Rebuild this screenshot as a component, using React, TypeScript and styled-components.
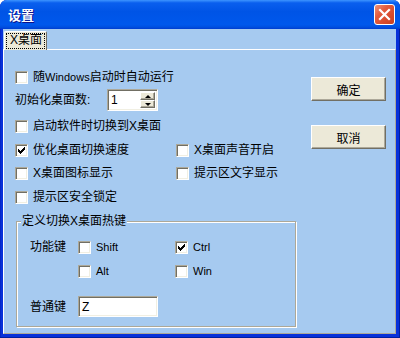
import React from "react";
import styled, { createGlobalStyle } from "styled-components";

const FONT = `"Liberation Sans", "Noto Sans CJK SC", sans-serif`;

const Global = createGlobalStyle`
  html, body { margin: 0; padding: 0; background: #ffffff; }
  body { width: 400px; height: 338px; overflow: hidden; }
`;

const Window = styled.div`
  width: 400px;
  height: 338px;
  box-sizing: border-box;
  display: flex;
  flex-direction: column;
  background: #0831d9;
  border-radius: 7px 7px 0 0;
  overflow: hidden;
  font-family: ${FONT};
  font-size: 12px;
  color: #000;
  box-shadow: inset -1px -1px #001ea0, inset 1px 0 #0427c8;
`;

const TitleBar = styled.div`
  height: 29px;
  flex: none;
  display: flex;
  align-items: center;
  justify-content: space-between;
  padding: 0 5px 0 8px;
  background: linear-gradient(
    180deg,
    #3d95ff 0%,
    #0a5fee 10%,
    #0054e6 40%,
    #0058ec 85%,
    #0050e0 93%,
    #003dd0 100%
  );
`;

const Title = styled.span`
  font-family: "Noto Sans CJK SC", sans-serif;
  font-weight: bold;
  font-size: 13px;
  color: #fff;
  text-shadow: 1px 1px #0f1089;
  line-height: 16px;
`;

const CloseButton = styled.div`
  width: 21px;
  height: 21px;
  box-sizing: border-box;
  border: 1px solid #fff;
  border-radius: 3px;
  background: linear-gradient(135deg, #f0947a 0%, #e35d3f 35%, #d74a2c 70%, #c8401f 100%);
  display: flex;
  align-items: center;
  justify-content: center;
`;

const Client = styled.div`
  flex: 1;
  display: flex;
  flex-direction: column;
  margin: 0 4px 4px 3px;
  background: #a6caf0;
`;

const TabStrip = styled.div`
  height: 20px;
  flex: none;
  display: flex;
  align-items: flex-end;
  padding-left: 1px;
`;

const Tab = styled.div`
  height: 19px;
  margin-bottom: -1px;
  position: relative;
  z-index: 1;
  box-sizing: border-box;
  padding: 1px 1px 0 1px;
  background: #ece9d8;
  border-top: 1px solid #fff;
  border-left: 1px solid #fff;
  border-right: 1px solid #716f64;
  border-radius: 2px 2px 0 0;
  display: flex;
  align-items: flex-start;
`;

const TabLabel = styled.span`
  border: 1px dotted #000;
  padding: 0 2px 0 3px;
  line-height: 13px;
  height: 14px;
`;

const Latin = styled.span`
  font-size: 11px;
`;

const Panel = styled.div`
  flex: 1;
  box-sizing: border-box;
  border-top: 1px solid #fff;
  border-left: 1px solid #fff;
  border-right: 1px solid #aca899;
  border-bottom: 1px solid #aca899;
  display: grid;
  grid-template-columns: 1fr 75px;
  padding: 0 9px 0 11px;
`;

const LeftCol = styled.div`
  display: flex;
  flex-direction: column;
  padding-top: 18px;
`;

const Line = styled.div<{ $mt: number; $h?: number }>`
  display: flex;
  align-items: center;
  height: ${(p) => p.$h ?? 18}px;
  margin-top: ${(p) => p.$mt}px;
  line-height: 14px;
  white-space: nowrap;
`;

const PairLine = styled.div<{ $mt: number }>`
  display: grid;
  grid-template-columns: 161px auto;
  align-items: center;
  height: 18px;
  margin-top: ${(p) => p.$mt}px;
  line-height: 14px;
  white-space: nowrap;
`;

const CheckItem = styled.label`
  display: flex;
  align-items: center;
  gap: 5px;
`;

const Box = styled.span`
  width: 13px;
  height: 13px;
  box-sizing: border-box;
  flex: none;
  background: #fff;
  border: 1px solid;
  border-color: #aca899 #fff #fff #aca899;
  box-shadow: inset 1px 1px #716f64, inset -1px -1px #f1efe2;
  display: flex;
  align-items: center;
  justify-content: center;
`;

const FieldLabel = styled.span<{ $w: number }>`
  width: ${(p) => p.$w}px;
  flex: none;
`;

const Sunken = styled.div<{ $w: number; $h: number }>`
  width: ${(p) => p.$w}px;
  height: ${(p) => p.$h}px;
  box-sizing: border-box;
  border: 1px solid;
  border-color: #aca899 #fff #fff #aca899;
  box-shadow: inset 1px 1px #716f64, inset -1px -1px #f1efe2;
  background: #fff;
  display: flex;
  align-items: center;
  padding: 2px 2px 2px 3px;
  line-height: 14px;
`;

const SpinText = styled.span`
  flex: 1;
`;

const SpinButtons = styled.div`
  width: 15px;
  align-self: stretch;
  display: flex;
  flex-direction: column;
`;

const SpinButton = styled.div`
  flex: 1;
  box-sizing: border-box;
  background: #ece9d8;
  border: 1px solid;
  border-color: #fff #716f64 #716f64 #fff;
  box-shadow: inset -1px -1px #aca899;
  display: flex;
  align-items: center;
  justify-content: center;
`;

const Arrow = styled.span<{ $up?: boolean }>`
  width: 0;
  height: 0;
  border-left: 3px solid transparent;
  border-right: 3px solid transparent;
  ${(p) =>
    p.$up ? "border-bottom: 3px solid #000;" : "border-top: 3px solid #000;"}
`;

const Group = styled.div`
  position: relative;
  margin: 15px 0 0 1px;
  width: 280px;
  height: 106px;
  box-sizing: border-box;
  border: 1px solid #aca899;
  box-shadow: inset 1px 1px #fff, 1px 1px #fff;
  padding: 16px 0 0 13px;
`;

const GroupLegend = styled.span`
  position: absolute;
  top: -8px;
  left: 4px;
  padding: 0 1px;
  background: #a6caf0;
  line-height: 14px;
  white-space: nowrap;
`;

const GroupRow = styled.div<{ $mt: number; $h?: number }>`
  display: grid;
  grid-template-columns: 48px 97px auto;
  align-items: center;
  height: ${(p) => p.$h ?? 18}px;
  margin-top: ${(p) => p.$mt}px;
  line-height: 14px;
  white-space: nowrap;
`;

const RightCol = styled.div`
  display: flex;
  flex-direction: column;
  gap: 24px;
  padding-top: 27px;
`;

const Button = styled.button`
  width: 75px;
  height: 24px;
  box-sizing: border-box;
  padding: 0;
  background: #ece9d8;
  font: 12px ${FONT};
  color: #000;
  border: 1px solid;
  border-color: #fff #716f64 #716f64 #fff;
  box-shadow: inset -1px -1px #aca899;
`;

function Check({ checked, children }: { checked?: boolean; children: React.ReactNode }) {
  return (
    <CheckItem>
      <Box>
        {checked && (
          <svg width="7" height="7" viewBox="0 0 7 7" shapeRendering="crispEdges">
            <path d="M6 0h1v3h-1v1h-1v1h-1v1h-1v1h-1v-1h-1v-1h-1v-3h1v1h1v1h1v-1h1v-1h1z" fill="#000" />
          </svg>
        )}
      </Box>
      <span>{children}</span>
    </CheckItem>
  );
}

export default function App() {
  return (
    <>
      <Global />
      <Window>
        <TitleBar>
          <Title>设置</Title>
          <CloseButton>
            <svg width="19" height="19" viewBox="0 0 19 19">
              <path d="M5 5L14 14M14 5L5 14" stroke="#fff" strokeWidth="2.2" strokeLinecap="square" />
            </svg>
          </CloseButton>
        </TitleBar>
        <Client>
          <TabStrip>
            <Tab>
              <TabLabel>X桌面</TabLabel>
            </Tab>
          </TabStrip>
          <Panel>
            <LeftCol>
              <Line $mt={0}>
                <Check>
                  随<Latin>Windows</Latin>启动时自动运行
                </Check>
              </Line>
              <Line $mt={3} $h={22}>
                <FieldLabel $w={92}>初始化桌面数:</FieldLabel>
                <Sunken $w={51} $h={22}>
                  <SpinText>1</SpinText>
                  <SpinButtons>
                    <SpinButton>
                      <Arrow $up />
                    </SpinButton>
                    <SpinButton>
                      <Arrow />
                    </SpinButton>
                  </SpinButtons>
                </Sunken>
              </Line>
              <Line $mt={6}>
                <Check>启动软件时切换到X桌面</Check>
              </Line>
              <PairLine $mt={6}>
                <Check checked>优化桌面切换速度</Check>
                <Check>X桌面声音开启</Check>
              </PairLine>
              <PairLine $mt={5}>
                <Check>X桌面图标显示</Check>
                <Check>提示区文字显示</Check>
              </PairLine>
              <Line $mt={6}>
                <Check>提示区安全锁定</Check>
              </Line>
              <Group>
                <GroupLegend>定义切换X桌面热键</GroupLegend>
                <GroupRow $mt={0}>
                  <span>功能键</span>
                  <Check>
                    <Latin>Shift</Latin>
                  </Check>
                  <Check checked>
                    <Latin>Ctrl</Latin>
                  </Check>
                </GroupRow>
                <GroupRow $mt={6}>
                  <span />
                  <Check>
                    <Latin>Alt</Latin>
                  </Check>
                  <Check>
                    <Latin>Win</Latin>
                  </Check>
                </GroupRow>
                <GroupRow $mt={16} $h={21}>
                  <span>普通键</span>
                  <Sunken $w={80} $h={21}>Z</Sunken>
                </GroupRow>
              </Group>
            </LeftCol>
            <RightCol>
              <Button>确定</Button>
              <Button>取消</Button>
            </RightCol>
          </Panel>
        </Client>
      </Window>
    </>
  );
}
